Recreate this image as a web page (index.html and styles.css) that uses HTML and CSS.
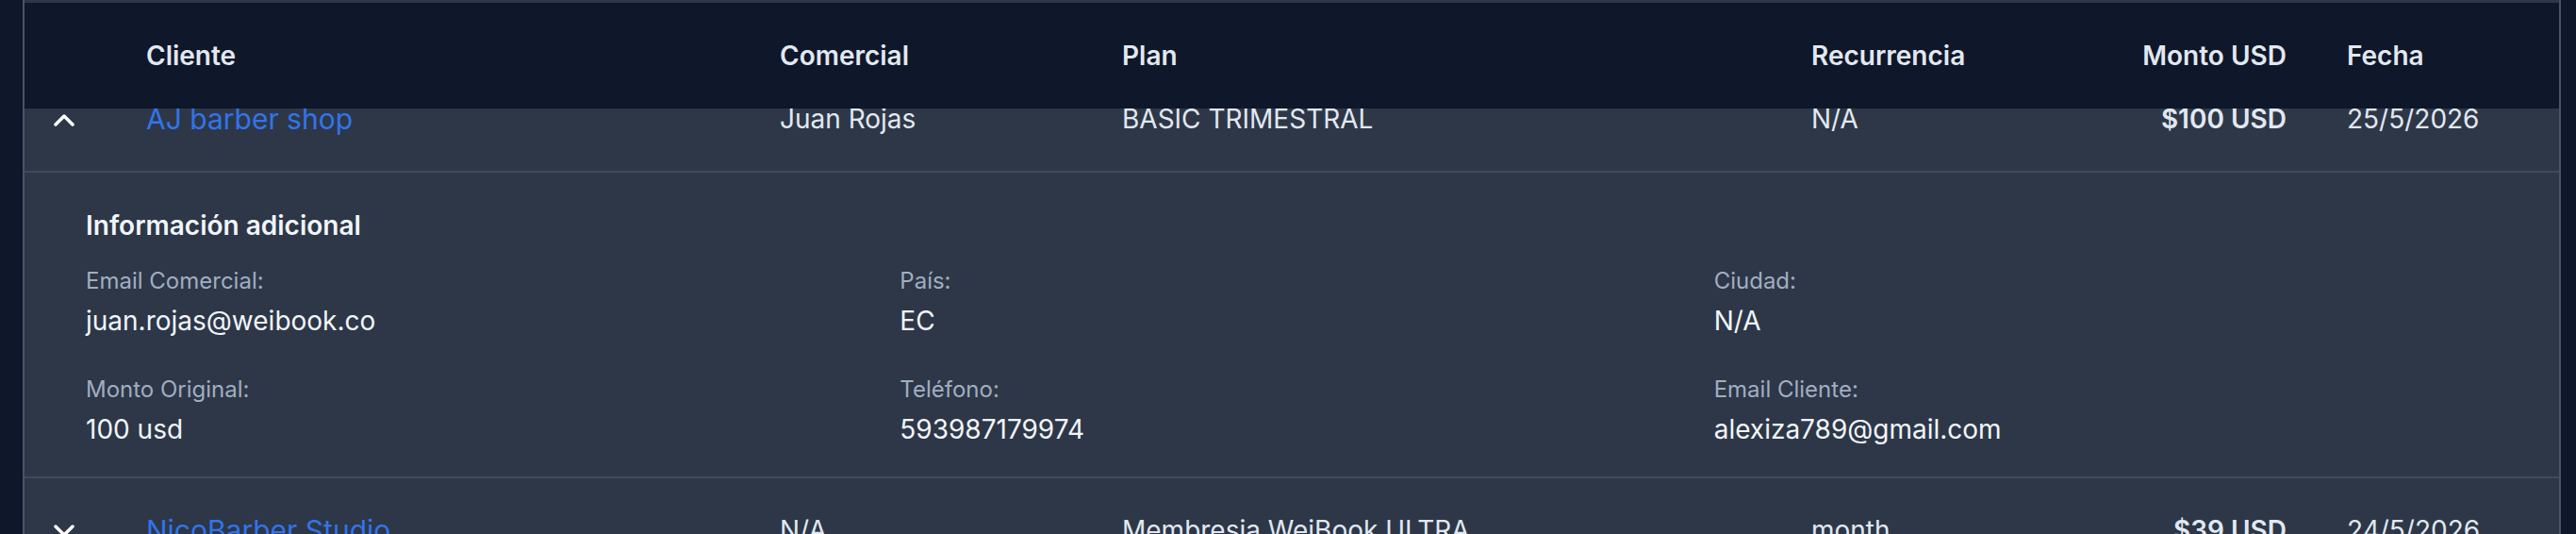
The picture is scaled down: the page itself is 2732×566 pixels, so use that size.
FILE: index.html
```html
<!DOCTYPE html>
<html lang="es">
  <head>
    <meta charset="UTF-8" />
    <meta name="viewport" content="width=device-width, initial-scale=1.0" />
    <title>Ventas | WeiBook</title>
    <link rel="stylesheet" href="styles.css">
  </head>
  <body>
    <div class="table-card">
      <div class="table-head">
        <div class="cell"></div>
        <div class="cell">Cliente</div>
        <div class="cell">Comercial</div>
        <div class="cell">Plan</div>
        <div class="cell">Recurrencia</div>
        <div class="cell right">Monto USD</div>
        <div class="cell">Fecha</div>
      </div>

      <div class="table-body">
        <div class="row">
          <div class="cell toggle">
            <svg width="22" height="15" viewBox="0 0 22 15">
              <polyline points="2,13 11,4 20,13" fill="none" stroke="#fff" stroke-width="3.5" stroke-linecap="round" stroke-linejoin="round" />
            </svg>
          </div>
          <div class="cell client">AJ barber shop</div>
          <div class="cell">Juan Rojas</div>
          <div class="cell">BASIC TRIMESTRAL</div>
          <div class="cell">N/A</div>
          <div class="cell right amount">$100 USD</div>
          <div class="cell">25/5/2026</div>
        </div>

        <!-- Expanded details -->
        <div class="details">
          <h3>Información adicional</h3>
          <div class="details-grid">
            <div class="field">
              <div class="field-label">Email Comercial:</div>
              <div class="field-value">juan.rojas@weibook.co</div>
            </div>
            <div class="field">
              <div class="field-label">País:</div>
              <div class="field-value">EC</div>
            </div>
            <div class="field">
              <div class="field-label">Ciudad:</div>
              <div class="field-value">N/A</div>
            </div>
            <div class="field">
              <div class="field-label">Monto Original:</div>
              <div class="field-value">100 usd</div>
            </div>
            <div class="field">
              <div class="field-label">Teléfono:</div>
              <div class="field-value">593987179974</div>
            </div>
            <div class="field">
              <div class="field-label">Email Cliente:</div>
              <div class="field-value">alexiza789@gmail.com</div>
            </div>
          </div>
        </div>

        <div class="row">
          <div class="cell toggle">
            <svg width="22" height="15" viewBox="0 0 22 15">
              <polyline points="2,3 11,12 20,3" fill="none" stroke="#fff" stroke-width="3.5" stroke-linecap="round" stroke-linejoin="round" />
            </svg>
          </div>
          <div class="cell client">NicoBarber Studio</div>
          <div class="cell">N/A</div>
          <div class="cell">Membresia WeiBook ULTRA</div>
          <div class="cell">month</div>
          <div class="cell right amount">$39 USD</div>
          <div class="cell">24/5/2026</div>
        </div>
      </div>
    </div>
  </body>
</html>
```

FILE: styles.css
```css
html,
body {
  height: 566px;
  overflow: hidden;
}
body {
  margin: 0;
  padding: 0 16px 0 24px;
  background-color: #0f172a;
  font-family: "Inter", "Liberation Sans", sans-serif;
  color: #e2e8f0;
}
.table-card {
  height: 100%;
  padding-top: 3px;
  background-color: #2d3748;
  border-left: 2px solid #475569;
  border-right: 2px solid #475569;
  overflow: hidden;
}
.table-head,
.row {
  display: grid;
  grid-template-columns: 97px 672px 363px 731px 337px 231px 257px;
  align-items: center;
}
.table-head {
  position: relative;
  z-index: 1;
  height: 112px;
  background-color: #0f172a;
  font-size: 28px;
  font-weight: 600;
  color: #e2e8f0;
}
.cell {
  padding: 0 32px;
  line-height: 40px;
  white-space: nowrap;
}
.cell.right {
  text-align: right;
}
.table-body {
  margin-top: -44px;
}
.row {
  height: 110px;
  font-size: 28px;
  border-bottom: 2px solid #3e4a5d;
}
.toggle {
  padding: 0 0 0 31px;
  display: flex;
  align-items: center;
}
.client {
  font-size: 30px;
  color: #3274ea;
}
.amount {
  font-weight: 600;
}
.details {
  padding: 36px 65px 30px;
  border-bottom: 2px solid #3e4a5d;
}
.details h3 {
  margin: 0 0 23px;
  font-size: 28px;
  line-height: 40px;
  font-weight: 600;
  color: #f1f5f9;
}
.details-grid {
  display: grid;
  grid-template-columns: repeat(3, 1fr);
  column-gap: 32px;
  row-gap: 37px;
}
.field-label {
  font-size: 24px;
  line-height: 32px;
  color: #a0aec0;
  margin-bottom: 6px;
}
.field-value {
  font-size: 28px;
  line-height: 40px;
  color: #f1f5f9;
}
```
